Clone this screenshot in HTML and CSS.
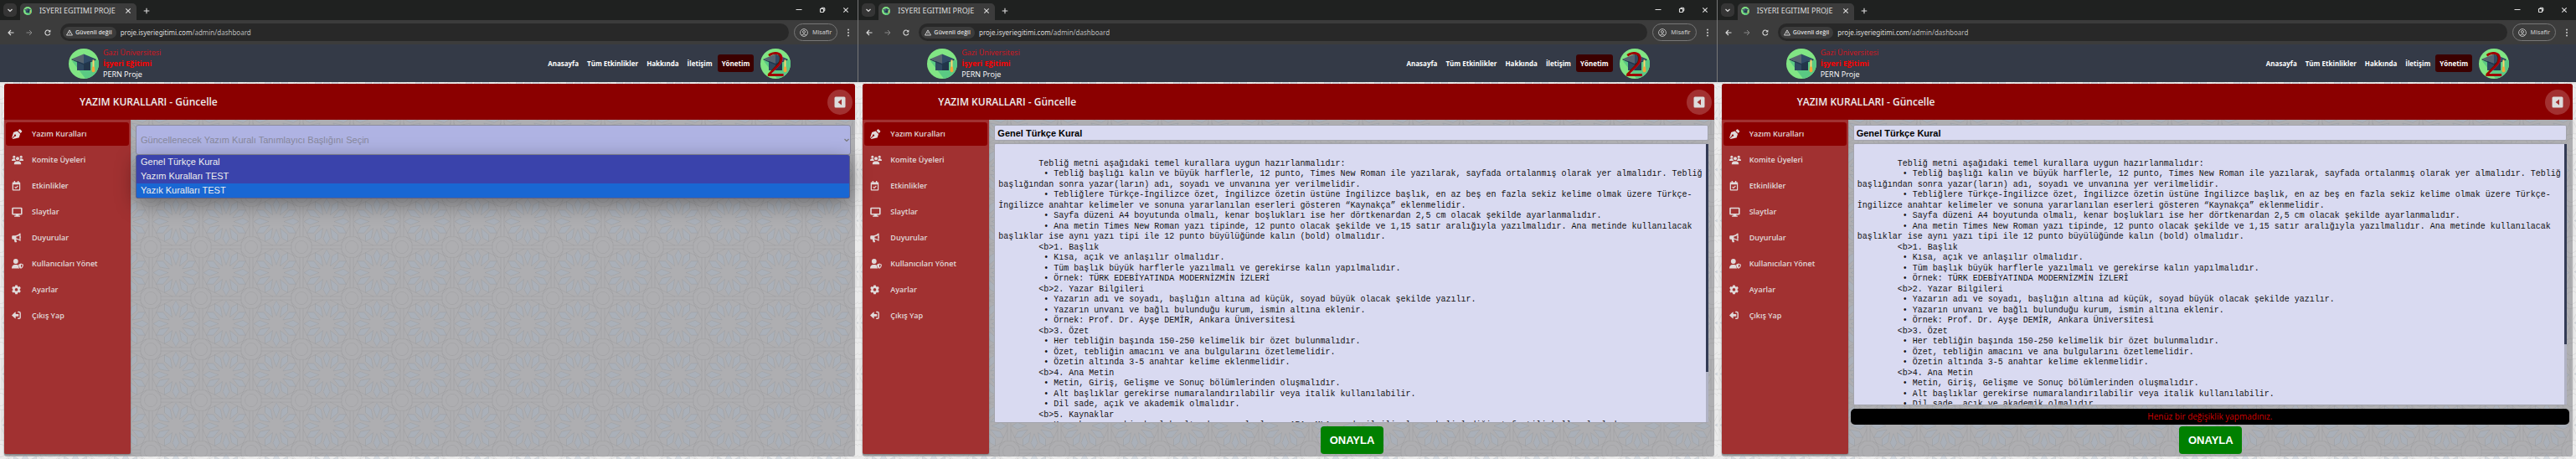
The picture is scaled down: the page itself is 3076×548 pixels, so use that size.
FILE: index.html
```html
<!DOCTYPE html>
<html lang="tr">
<head>
<meta charset="utf-8">
<title>ISYERI EGITIMI PROJE</title>
<link rel="stylesheet" href="styles.css">
</head>
<body>
<svg class="sprite" aria-hidden="true">
  <symbol id="logo" viewBox="0 0 36 36">
    <circle cx="18" cy="18" r="18" fill="#81e584"/>
    <path d="M4 15 L20 35.8 A18 18 0 0 0 35.6 14 L32 13 Z" fill="#5ac983"/>
    <path d="M10 15h16v11H10z" fill="#2f4860"/>
    <path d="M18 15h8v11h-8z" fill="#223549"/>
    <path d="M3.500 12.500L18 6.500V18z" fill="#56646f"/>
    <path d="M18 6.500l14.500 6L18 18z" fill="#304a66"/>
    <path d="M3.500 12.500L18 18l14.500-5.500v1.200L18 19.500 3.500 13.600z" fill="#22384e"/>
    <path d="M28.500 13.500h2V24h-2z" fill="#fcd670"/>
    <path d="M28 22q1.500-1 3 0l.5 5q-2 2.500-4 0z" fill="#f3a63c"/>
  </symbol>
  <symbol id="chevron" viewBox="0 0 8 8"><path d="M1.500 3L4 5.400 6.500 3" fill="none" stroke="currentColor" stroke-width="1.200"/></symbol>
  <symbol id="close" viewBox="0 0 8 8"><path d="M1.300 1.300l5.400 5.400M6.700 1.300L1.300 6.700" fill="none" stroke="currentColor" stroke-width="1.100"/></symbol>
  <symbol id="plus" viewBox="0 0 8 8"><path d="M4 .7v6.600M.7 4h6.600" fill="none" stroke="currentColor" stroke-width="1.100"/></symbol>
  <symbol id="minus" viewBox="0 0 8 8"><path d="M.5 3.500h7" stroke="currentColor" stroke-width="1"/></symbol>
  <symbol id="restore" viewBox="0 0 8 8"><path d="M1.500 3q0-.5.5-.5h3q.5 0 .5.500v3q0 .5-.5.500H2q-.5 0-.5-.5zM3 2.200q0-.9.8-.9h2q1 0 1 1v2q0 .8-.9.800" fill="none" stroke="currentColor" stroke-width="1.100"/></symbol>
  <symbol id="back" viewBox="0 0 8 8"><path d="M7.500 4H1M4 1L1 4l3 3" fill="none" stroke="currentColor" stroke-width="1.100"/></symbol>
  <symbol id="forward" viewBox="0 0 8 8"><path d="M.5 4H7M4 1l3 3-3 3" fill="none" stroke="currentColor" stroke-width="1"/></symbol>
  <symbol id="reload" viewBox="0 0 8 8"><path d="M6.800 4.800A3 3 0 1 1 6.300 2.200" fill="none" stroke="currentColor" stroke-width="1.100"/><path d="M7.400.5v3H4.400z" fill="currentColor"/></symbol>
  <symbol id="warn" viewBox="0 0 8 8"><path d="M4 .9L7.500 7h-7z" fill="none" stroke="currentColor" stroke-width=".9"/><path d="M4 3v2M4 5.500v.8" stroke="currentColor" stroke-width=".8"/></symbol>
  <symbol id="person" viewBox="0 0 10 10"><circle cx="5" cy="5" r="4.400" fill="none" stroke="currentColor"/><circle cx="5" cy="4" r="1.500" fill="none" stroke="currentColor"/><path d="M2.200 8q2.800-2.600 5.600 0" fill="none" stroke="currentColor"/></symbol>
  <symbol id="dots" viewBox="0 0 4 10"><circle cx="2" cy="1.500" r=".9"/><circle cx="2" cy="5" r=".9"/><circle cx="2" cy="8.500" r=".9"/></symbol>
  <symbol id="i-pen" viewBox="0 0 14 12"><path fill-rule="evenodd" d="M6.600 2.400l3.500 3.500-1.300 4q-.2.500-.7.600L1.300 12 .8 11.600 3.700 8.700a1.100 1.100 0 1 0-.7-.7L.4 10.900.1 10.600 2 4.400q.1-.5.600-.7zM7.500 1.900L9 .4q.6-.5 1.200 0L12 2.200q.5.600 0 1.200L10.600 5z"/></symbol>
  <symbol id="i-users" viewBox="0 0 14 12"><circle cx="2.800" cy="2.200" r="1.500"/><circle cx="11.200" cy="2.200" r="1.500"/><circle cx="7" cy="4.200" r="2"/><path d="M0 7q0-2.700 2.700-2.700h1.400q0 1.700 1 2.700zM14 7q0-2.700-2.700-2.700H9.900q0 1.700-1 2.700zM2.800 11.200q0-3.700 3-3.700h2.400q3 0 3 3.700z"/></symbol>
  <symbol id="i-cal" viewBox="0 0 14 12"><path fill-rule="evenodd" d="M2.700 0H4v1.400h3V0h1.300v1.400h.9q1 0 1 1V10.600q0 1-1 1H1.700q-1 0-1-1V2.400q0-1 1-1h1zM2 4.200v6.100h7V4.200z"/><path d="M3.600 7.200l1.300 1.300 2.500-2.500" fill="none" stroke="currentColor" stroke-width="1.100"/></symbol>
  <symbol id="i-screen" viewBox="0 0 14 12"><path fill-rule="evenodd" d="M1.500.7h9.800q1.300 0 1.300 1.300v6.200q0 1.300-1.300 1.300H8.200l.3 1h1q.6 0 .6.600t-.6.600H3.500q-.6 0-.6-.6t.6-.6h1l.3-1H1.500Q.2 9.500.2 8.200V2Q.2.700 1.500.7zM1.800 2.200V8h9.200V2.200z"/></symbol>
  <symbol id="i-horn" viewBox="0 0 14 12"><path fill-rule="evenodd" d="M9.700.6q.9-.5.900.4v3.200q1 .8 0 1.800v3.200q0 .9-.9.400Q7.800 7.900 5.200 7.800L6 10.500q.1.700-.5.700H4.200q-.5 0-.7-.5L2.700 7.800H1.400Q.2 7.800.2 6.600v-2.200Q.2 3.200 1.400 3.200h3Q7.800 2.900 9.700.6zM9.300 3Q7.600 4.300 5.400 4.500v2Q7.600 6.600 9.300 8z"/></symbol>
  <symbol id="i-shield" viewBox="0 0 14 12"><circle cx="4.800" cy="3" r="2.900"/><path d="M0 11.600Q0 7 4 7h2.200l1.800.8q-.2 2.500 1.400 3.800z"/><path fill-rule="evenodd" d="M11 5.600l2.900 1.100q0 3.900-2.900 5.100-2.900-1.200-2.900-5.100zM11 6.800v3.800q1.600-1 1.800-3.100z"/></symbol>
  <symbol id="i-gear" viewBox="0 0 14 12"><path fill-rule="evenodd" d="M4.300.4h2.400l.4 1.500 1 .6 1.500-.5 1.200 2.100-1.100 1.100v1.200l1.100 1.100-1.200 2.100-1.500-.5-1 .6-.4 1.500H4.300l-.4-1.500-1-.6-1.500.5L.2 7.500l1.100-1.100V5.200L.2 4.100 1.400 2l1.500.5 1-.6zM5.500 4a1.800 1.800 0 1 0 .01 0z"/></symbol>
  <symbol id="i-exit" viewBox="0 0 14 12"><path d="M0 5.400L4.100 1.600q.6-.3.600.4v2h3q.6 0 .6.600v1.600q0 .6-.6.600h-3v2q0 .7-.6.400z"/><path d="M7.200 1.500h1.600q1.400 0 1.400 1.400v5q0 1.400-1.400 1.400H7.200" fill="none" stroke="currentColor" stroke-width="1.400"/></symbol>
  <symbol id="i-caret" viewBox="0 0 14 14"><path fill-rule="evenodd" d="M2 .5h10q1.500 0 1.500 1.500v10q0 1.500-1.500 1.500H2Q.5 13.500.5 12V2Q.5.500 2 .5zM9 3.600L4.600 7 9 10.400z"/></symbol>
</svg>

<div class="shots">

<section class="shot">
  <div class="tabs">
    <button class="tab-menu" aria-label="Sekmeler"><svg class="s8"><use href="#chevron"/></svg></button>
    <div class="tab"><svg class="s10"><use href="#logo"/></svg><span class="tab-title">ISYERI EGITIMI PROJE</span><svg class="s8"><use href="#close"/></svg></div>
    <button class="bare new-tab" aria-label="Yeni sekme"><svg class="s8"><use href="#plus"/></svg></button>
    <div class="win"><svg class="s8"><use href="#minus"/></svg><svg class="s8"><use href="#restore"/></svg><svg class="s8"><use href="#close"/></svg></div>
  </div>
  <div class="toolbar">
    <div class="history"><svg class="s8"><use href="#back"/></svg><svg class="s8 dim"><use href="#forward"/></svg><svg class="s8"><use href="#reload"/></svg></div>
    <div class="address"><span class="chip"><svg class="s8"><use href="#warn"/></svg>Güvenli değil</span><span class="url">proje.isyeriegitimi.com<span class="path">/admin/dashboard</span></span></div>
    <button class="guest"><svg class="s10"><use href="#person"/></svg>Misafir</button>
    <svg class="dots"><use href="#dots"/></svg>
  </div>
  <header class="site">
    <div class="brand"><svg class="logo"><use href="#logo"/></svg><div class="names"><span class="red">Gazi Üniversitesi</span><b class="red">İşyeri Eğitimi</b><span>PERN Proje</span></div></div>
    <nav class="links"><a href="#">Anasayfa</a><a href="#">Tüm Etkinlikler</a><a href="#">Hakkında</a><a href="#">İletişim</a><a href="#" class="on">Yönetim</a></nav>
    <div class="avatar"><svg class="logo"><use href="#logo"/></svg><span class="num">2</span></div>
  </header>
  <div class="dash">
    <div class="bar"><h1>YAZIM KURALLARI - Güncelle</h1><button class="fold" aria-label="Menüyü daralt"><svg><use href="#i-caret"/></svg></button></div>
    <div class="body">
      <aside class="side">
        <a href="#" class="on"><svg><use href="#i-pen"/></svg>Yazım Kuralları</a>
        <a href="#"><svg><use href="#i-users"/></svg>Komite Üyeleri</a>
        <a href="#"><svg><use href="#i-cal"/></svg>Etkinlikler</a>
        <a href="#"><svg><use href="#i-screen"/></svg>Slaytlar</a>
        <a href="#"><svg><use href="#i-horn"/></svg>Duyurular</a>
        <a href="#"><svg><use href="#i-shield"/></svg>Kullanıcıları Yönet</a>
        <a href="#"><svg><use href="#i-gear"/></svg>Ayarlar</a>
        <a href="#"><svg><use href="#i-exit"/></svg>Çıkış Yap</a>
      </aside>
      <main class="main">
        <div class="picker">
          <select aria-label="Yazım kuralı"><option>Güncellenecek Yazım Kuralı Tanımlayıcı Başlığını Seçin</option></select>
          <svg class="s8 arrow"><use href="#chevron"/></svg>
          <ul class="menu" role="listbox"><li role="option">Genel Türkçe Kural</li><li role="option">Yazım Kuralları TEST</li><li role="option" class="hot">Yazık Kuralları TEST</li></ul>
        </div>
      </main>
    </div>
  </div>
</section>

<section class="shot">
  <div class="tabs">
    <button class="tab-menu" aria-label="Sekmeler"><svg class="s8"><use href="#chevron"/></svg></button>
    <div class="tab"><svg class="s10"><use href="#logo"/></svg><span class="tab-title">ISYERI EGITIMI PROJE</span><svg class="s8"><use href="#close"/></svg></div>
    <button class="bare new-tab" aria-label="Yeni sekme"><svg class="s8"><use href="#plus"/></svg></button>
    <div class="win"><svg class="s8"><use href="#minus"/></svg><svg class="s8"><use href="#restore"/></svg><svg class="s8"><use href="#close"/></svg></div>
  </div>
  <div class="toolbar">
    <div class="history"><svg class="s8"><use href="#back"/></svg><svg class="s8 dim"><use href="#forward"/></svg><svg class="s8"><use href="#reload"/></svg></div>
    <div class="address"><span class="chip"><svg class="s8"><use href="#warn"/></svg>Güvenli değil</span><span class="url">proje.isyeriegitimi.com<span class="path">/admin/dashboard</span></span></div>
    <button class="guest"><svg class="s10"><use href="#person"/></svg>Misafir</button>
    <svg class="dots"><use href="#dots"/></svg>
  </div>
  <header class="site">
    <div class="brand"><svg class="logo"><use href="#logo"/></svg><div class="names"><span class="red">Gazi Üniversitesi</span><b class="red">İşyeri Eğitimi</b><span>PERN Proje</span></div></div>
    <nav class="links"><a href="#">Anasayfa</a><a href="#">Tüm Etkinlikler</a><a href="#">Hakkında</a><a href="#">İletişim</a><a href="#" class="on">Yönetim</a></nav>
    <div class="avatar"><svg class="logo"><use href="#logo"/></svg><span class="num">2</span></div>
  </header>
  <div class="dash">
    <div class="bar"><h1>YAZIM KURALLARI - Güncelle</h1><button class="fold" aria-label="Menüyü daralt"><svg><use href="#i-caret"/></svg></button></div>
    <div class="body">
      <aside class="side">
        <a href="#" class="on"><svg><use href="#i-pen"/></svg>Yazım Kuralları</a>
        <a href="#"><svg><use href="#i-users"/></svg>Komite Üyeleri</a>
        <a href="#"><svg><use href="#i-cal"/></svg>Etkinlikler</a>
        <a href="#"><svg><use href="#i-screen"/></svg>Slaytlar</a>
        <a href="#"><svg><use href="#i-horn"/></svg>Duyurular</a>
        <a href="#"><svg><use href="#i-shield"/></svg>Kullanıcıları Yönet</a>
        <a href="#"><svg><use href="#i-gear"/></svg>Ayarlar</a>
        <a href="#"><svg><use href="#i-exit"/></svg>Çıkış Yap</a>
      </aside>
      <main class="main">
        <form class="edit">
          <input type="text" aria-label="Başlık" value="Genel Türkçe Kural">
          <div class="sheet">
          <textarea aria-label="Kural metni">

        Tebliğ metni aşağıdaki temel kurallara uygun hazırlanmalıdır:
         • Tebliğ başlığı kalın ve büyük harflerle, 12 punto, Times New Roman ile yazılarak, sayfada ortalanmış olarak yer almalıdır. Tebliğ başlığından sonra yazar(ların) adı, soyadı ve unvanına yer verilmelidir.
         • Tebliğlere Türkçe-İngilizce özet, İngilizce özetin üstüne İngilizce başlık, en az beş en fazla sekiz kelime olmak üzere Türkçe-İngilizce anahtar kelimeler ve sonuna yararlanılan eserleri gösteren “Kaynakça” eklenmelidir.
         • Sayfa düzeni A4 boyutunda olmalı, kenar boşlukları ise her dörtkenardan 2,5 cm olacak şekilde ayarlanmalıdır.
         • Ana metin Times New Roman yazı tipinde, 12 punto olacak şekilde ve 1,15 satır aralığıyla yazılmalıdır. Ana metinde kullanılacak başlıklar ise aynı yazı tipi ile 12 punto büyülüğünde kalın (bold) olmalıdır.
        &lt;b&gt;1. Başlık
         • Kısa, açık ve anlaşılır olmalıdır.
         • Tüm başlık büyük harflerle yazılmalı ve gerekirse kalın yapılmalıdır.
         • Örnek: TÜRK EDEBİYATINDA MODERNİZMİN İZLERİ
        &lt;b&gt;2. Yazar Bilgileri
         • Yazarın adı ve soyadı, başlığın altına ad küçük, soyad büyük olacak şekilde yazılır.
         • Yazarın unvanı ve bağlı bulunduğu kurum, ismin altına eklenir.
         • Örnek: Prof. Dr. Ayşe DEMİR, Ankara Üniversitesi
        &lt;b&gt;3. Özet
         • Her tebliğin başında 150-250 kelimelik bir özet bulunmalıdır.
         • Özet, tebliğin amacını ve ana bulgularını özetlemelidir.
         • Özetin altında 3-5 anahtar kelime eklenmelidir.
        &lt;b&gt;4. Ana Metin
         • Metin, Giriş, Gelişme ve Sonuç bölümlerinden oluşmalıdır.
         • Alt başlıklar gerekirse numaralandırılabilir veya italik kullanılabilir.
         • Dil sade, açık ve akademik olmalıdır.
        &lt;b&gt;5. Kaynaklar
         • Kaynakça aynı bir başlık altında yer almalı ve APA, MLA ya da ilgili alanın belirlediği atıf stili kullanılmalıdır.
</textarea>
          <span class="track"><span class="thumb" style="height:82%"></span></span>
          </div>
          <button type="button" class="ok">ONAYLA</button>
        </form>
      </main>
    </div>
  </div>
</section>

<section class="shot">
  <div class="tabs">
    <button class="tab-menu" aria-label="Sekmeler"><svg class="s8"><use href="#chevron"/></svg></button>
    <div class="tab"><svg class="s10"><use href="#logo"/></svg><span class="tab-title">ISYERI EGITIMI PROJE</span><svg class="s8"><use href="#close"/></svg></div>
    <button class="bare new-tab" aria-label="Yeni sekme"><svg class="s8"><use href="#plus"/></svg></button>
    <div class="win"><svg class="s8"><use href="#minus"/></svg><svg class="s8"><use href="#restore"/></svg><svg class="s8"><use href="#close"/></svg></div>
  </div>
  <div class="toolbar">
    <div class="history"><svg class="s8"><use href="#back"/></svg><svg class="s8 dim"><use href="#forward"/></svg><svg class="s8"><use href="#reload"/></svg></div>
    <div class="address"><span class="chip"><svg class="s8"><use href="#warn"/></svg>Güvenli değil</span><span class="url">proje.isyeriegitimi.com<span class="path">/admin/dashboard</span></span></div>
    <button class="guest"><svg class="s10"><use href="#person"/></svg>Misafir</button>
    <svg class="dots"><use href="#dots"/></svg>
  </div>
  <header class="site">
    <div class="brand"><svg class="logo"><use href="#logo"/></svg><div class="names"><span class="red">Gazi Üniversitesi</span><b class="red">İşyeri Eğitimi</b><span>PERN Proje</span></div></div>
    <nav class="links"><a href="#">Anasayfa</a><a href="#">Tüm Etkinlikler</a><a href="#">Hakkında</a><a href="#">İletişim</a><a href="#" class="on">Yönetim</a></nav>
    <div class="avatar"><svg class="logo"><use href="#logo"/></svg><span class="num">2</span></div>
  </header>
  <div class="dash">
    <div class="bar"><h1>YAZIM KURALLARI - Güncelle</h1><button class="fold" aria-label="Menüyü daralt"><svg><use href="#i-caret"/></svg></button></div>
    <div class="body">
      <aside class="side">
        <a href="#" class="on"><svg><use href="#i-pen"/></svg>Yazım Kuralları</a>
        <a href="#"><svg><use href="#i-users"/></svg>Komite Üyeleri</a>
        <a href="#"><svg><use href="#i-cal"/></svg>Etkinlikler</a>
        <a href="#"><svg><use href="#i-screen"/></svg>Slaytlar</a>
        <a href="#"><svg><use href="#i-horn"/></svg>Duyurular</a>
        <a href="#"><svg><use href="#i-shield"/></svg>Kullanıcıları Yönet</a>
        <a href="#"><svg><use href="#i-gear"/></svg>Ayarlar</a>
        <a href="#"><svg><use href="#i-exit"/></svg>Çıkış Yap</a>
      </aside>
      <main class="main">
        <form class="edit">
          <input type="text" aria-label="Başlık" value="Genel Türkçe Kural">
          <div class="sheet">
          <textarea aria-label="Kural metni">

        Tebliğ metni aşağıdaki temel kurallara uygun hazırlanmalıdır:
         • Tebliğ başlığı kalın ve büyük harflerle, 12 punto, Times New Roman ile yazılarak, sayfada ortalanmış olarak yer almalıdır. Tebliğ başlığından sonra yazar(ların) adı, soyadı ve unvanına yer verilmelidir.
         • Tebliğlere Türkçe-İngilizce özet, İngilizce özetin üstüne İngilizce başlık, en az beş en fazla sekiz kelime olmak üzere Türkçe-İngilizce anahtar kelimeler ve sonuna yararlanılan eserleri gösteren “Kaynakça” eklenmelidir.
         • Sayfa düzeni A4 boyutunda olmalı, kenar boşlukları ise her dörtkenardan 2,5 cm olacak şekilde ayarlanmalıdır.
         • Ana metin Times New Roman yazı tipinde, 12 punto olacak şekilde ve 1,15 satır aralığıyla yazılmalıdır. Ana metinde kullanılacak başlıklar ise aynı yazı tipi ile 12 punto büyülüğünde kalın (bold) olmalıdır.
        &lt;b&gt;1. Başlık
         • Kısa, açık ve anlaşılır olmalıdır.
         • Tüm başlık büyük harflerle yazılmalı ve gerekirse kalın yapılmalıdır.
         • Örnek: TÜRK EDEBİYATINDA MODERNİZMİN İZLERİ
        &lt;b&gt;2. Yazar Bilgileri
         • Yazarın adı ve soyadı, başlığın altına ad küçük, soyad büyük olacak şekilde yazılır.
         • Yazarın unvanı ve bağlı bulunduğu kurum, ismin altına eklenir.
         • Örnek: Prof. Dr. Ayşe DEMİR, Ankara Üniversitesi
        &lt;b&gt;3. Özet
         • Her tebliğin başında 150-250 kelimelik bir özet bulunmalıdır.
         • Özet, tebliğin amacını ve ana bulgularını özetlemelidir.
         • Özetin altında 3-5 anahtar kelime eklenmelidir.
        &lt;b&gt;4. Ana Metin
         • Metin, Giriş, Gelişme ve Sonuç bölümlerinden oluşmalıdır.
         • Alt başlıklar gerekirse numaralandırılabilir veya italik kullanılabilir.
         • Dil sade, açık ve akademik olmalıdır.
        &lt;b&gt;5. Kaynaklar
         • Kaynakça aynı bir başlık altında yer almalı ve APA, MLA ya da ilgili alanın belirlediği atıf stili kullanılmalıdır.
</textarea>
          <span class="track"><span class="thumb" style="height:77%"></span></span>
          </div>
          <p class="notice" role="alert">Henüz bir değişiklik yapmadınız.</p>
          <button type="button" class="ok">ONAYLA</button>
        </form>
      </main>
    </div>
  </div>
</section>

</div>
</body>
</html>
```

FILE: styles.css
```css
:root {
  --tile: url("data:image/svg+xml,%3Csvg xmlns='http://www.w3.org/2000/svg' width='60' height='61' viewBox='0 0 60 60' preserveAspectRatio='none'%3E%3Cdefs%3E%3Cg id='k'%3E%3Cpath id='p' d='M0-9L-4-20 0-27 4-20z'/%3E%3Cuse href='%23p' transform='rotate(30)'/%3E%3Cuse href='%23p' transform='rotate(60)'/%3E%3C/g%3E%3Cg id='r' fill='none'%3E%3Ccircle r='7.500'/%3E%3Cpath d='M-5-12H5L12-5V5L5 12H-5L-12 5V-5z'/%3E%3C/g%3E%3C/defs%3E%3Cg fill='%23a4b8cc' fill-opacity='.3' stroke='%23555' stroke-opacity='.14' stroke-width='.7'%3E%3Cg transform='translate(30 30)'%3E%3Cuse href='%23k'/%3E%3Cuse href='%23k' transform='rotate(90)'/%3E%3Cuse href='%23k' transform='rotate(180)'/%3E%3Cuse href='%23k' transform='rotate(270)'/%3E%3C/g%3E%3Cuse href='%23r'/%3E%3Cuse href='%23r' x='60'/%3E%3Cuse href='%23r' y='60'/%3E%3Cuse href='%23r' x='60' y='60'/%3E%3Cpath fill='none' d='M12-2H48M12 2H48M12 58H48M12 62H48M-2 12V48M2 12V48M58 12V48M62 12V48M5 12L26 2M55 12L34 2M5 48L26 58M55 48L34 58M12 5L2 26M12 55L2 34M48 5L58 26M48 55L58 34'/%3E%3C/g%3E%3C/svg%3E");
}

* { box-sizing: border-box; }

body {
  margin: 0;
  background: #ebebeb;
  font-family: "Open Sans", "Noto Sans", sans-serif;
  font-size: 9px;
}

a { color: inherit; text-decoration: none; }
button, input, select, textarea { font: inherit; color: inherit; margin: 0; }
svg { display: block; flex: none; fill: currentColor; }
.sprite { position: absolute; width: 0; height: 0; }
.s8 { width: 8px; height: 8px; }
.s10 { width: 10px; height: 10px; }

.shots { display: grid; grid-template-columns: repeat(3, minmax(0, 1fr)); min-height: 100vh; }
.shot { display: flex; flex-direction: column; background: var(--tile) 0 50px #ebebeb; }
.shot:not(:last-child) :is(.tabs, .toolbar, .site) { border-right: 1px solid #777; }

/* Browser frame */
.tabs { display: flex; align-items: center; height: 24px; padding: 4px 10px 0 4px; background: #1f2120; color: #ddd; }
.tab-menu { display: grid; place-items: center; width: 16px; height: 16px; margin: 0 4px 4px 0; padding: 0; border: 0; border-radius: 5px; background: #353535; }
.tab { display: flex; align-items: center; gap: 9px; width: 139px; height: 20px; padding: 0 6px 3px 4px; border-radius: 5px 5px 0 0; background: #3c3c3c; }
.tab-title { flex: 1; font-family: "Noto Sans", sans-serif; font-size: 9px; white-space: nowrap; }
.bare { border: 0; background: none; padding: 0; }
.new-tab { margin: 0 0 3px 8px; }
.win { display: flex; gap: 20px; margin: 0 0 4px auto; }

.toolbar { display: flex; align-items: center; height: 29px; padding: 0 9px; background: #3c3c3c; color: #ddd; }
.history { display: flex; gap: 14px; width: 63px; }
.dim { color: #888; }
.address { display: flex; flex: 1; align-items: center; gap: 5px; height: 21px; padding: 0 3px; border-radius: 11px; background: #282828; }
.chip { display: flex; align-items: center; gap: 3px; height: 14px; padding: 0 5px 0 4px; border-radius: 7px; background: #3c3c3c; font-size: 7px; font-weight: 600; }
.url { font-family: "Noto Sans", sans-serif; font-size: 8px; }
.path { color: #bbb; }
.guest { display: flex; align-items: center; gap: 5px; height: 21px; margin: 0 11px 0 6px; padding: 0 6px; border: 1px solid #777; border-radius: 11px; background: none; font-size: 7px; font-weight: 600; color: #bbb; }
.dots { width: 4px; height: 10px; }

/* Site header */
.site { display: flex; align-items: center; height: 45px; padding: 0 80px 0 82px; background: #343a47; color: #fff; }
.brand { display: flex; align-items: center; gap: 5px; margin-right: auto; }
.logo { width: 36px; height: 36px; }
.names { display: flex; flex-direction: column; line-height: 13px; }
.red { color: #f00; }
.names span.red { color: #d9141c; }
.links { display: flex; align-items: center; font-size: 8px; font-weight: 700; }
.links a { padding: 5px; line-height: 11px; }
.links .on { margin-left: 1px; border-radius: 3px; background: #3b0000; }
.avatar { position: relative; margin-left: 8px; }
.num { position: absolute; inset: 0; text-align: center; font-size: 40px; line-height: 36px; color: #a00000; }

/* Dashboard */
.dash { display: flex; flex: 1; flex-direction: column; margin: 2px 4px 3px 5px; border-radius: 3px; background: var(--tile) 55px 12px #aeaeb1; }
.bar { display: flex; align-items: center; justify-content: space-between; height: 43px; padding: 0 3px 0 90px; border-radius: 3px 3px 0 0; background: #8b0000; color: #eee; }
h1 { margin: 0; font-size: 12px; font-weight: 600; }
.fold { display: grid; place-items: center; width: 30px; height: 30px; padding: 0; border: 0; border-radius: 50%; background: #a23131; color: #ddd; }
.fold svg { width: 14px; height: 14px; }
.body { display: flex; flex: 1; }
.side { display: flex; flex-direction: column; gap: 3px; width: 151px; margin-bottom: 3px; padding: 3px 2px; border-radius: 0 0 2px 2px; background: #a13131; color: #e0dada; font-weight: 600; box-shadow: 0 1px 2px #777; }
.side a { display: flex; align-items: center; gap: 10px; height: 28px; padding: 0 7px 1px; border-radius: 3px; }
.side .on { background: #8b0000; }
.side svg { width: 14px; height: 12px; }

.main { display: flex; flex: 1; flex-direction: column; min-width: 0; padding: 6px 5px 3px 6px; font-family: "Liberation Sans", Arial, sans-serif; }
.picker { position: relative; }
.picker select { display: block; width: 100%; height: 36px; padding: 0 5px; appearance: none; border: 1px solid #8b8c9d; border-radius: 3px; background: #afb3e3; color: #88899c; font-size: 11px; }
.arrow { position: absolute; right: 1px; top: 14px; color: #777; }
.menu { position: absolute; left: 0; right: 1px; top: 36px; margin: 0; padding: 0; list-style: none; overflow: hidden; border: 1px solid #5c5f86; border-top: 0; border-radius: 3px; background: #3a43ab; color: #eee; font-size: 11px; line-height: 17px; box-shadow: 0 6px 24px rgba(0, 0, 0, .4); }
.menu li { padding: 0 5px; }
.menu .hot { background: #1967d3; }

.edit { display: flex; flex: 1; flex-direction: column; }
.edit input { height: 19px; margin: 0 2px 3px 0; padding: 0 3px; border: 1px solid #a3a4ac; border-radius: 2px; background: #d9daf1; color: #000; font-size: 11px; font-weight: 700; }
.sheet { position: relative; display: flex; flex: 1 0 0; min-height: 120px; margin: 0 2px 4px 0; }
.sheet textarea { flex: 1; min-width: 0; padding: 5px 3px 5px 4px; border: 1px solid #a3a4ac; border-right: 0; border-radius: 2px; resize: none; scrollbar-width: none; background: #d9daf1; color: #111; font: 10px/1.25 "Liberation Mono", monospace; }
.track { position: absolute; top: 1px; right: 0; bottom: 1px; width: 3px; background: #b0b2c4; }
.thumb { display: block; background: #333b55; }
.notice { margin: 0 -1px 2px -3px; border-radius: 5px; background: #000; color: #d00000; font: 10px/19px "Open Sans", sans-serif; text-align: center; }
.ok { align-self: center; width: 75px; height: 33px; padding: 0; border: 0; border-radius: 4px; background: #008000; color: #fff; font-size: 13px; font-weight: 700; }
```
